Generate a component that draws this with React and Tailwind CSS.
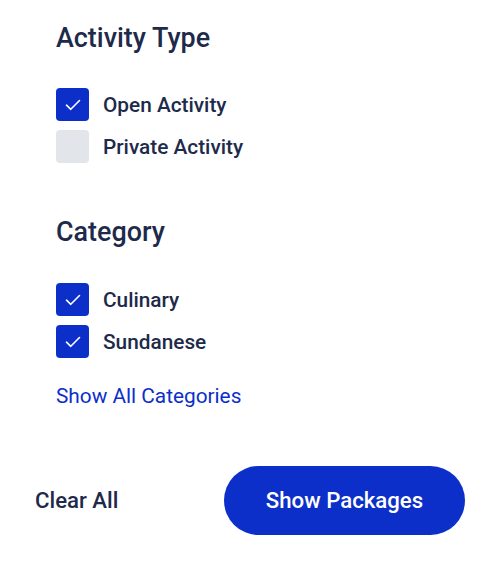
import React, { useState } from 'react';

const Check = () => (
  <svg width="16" height="12" viewBox="0 0 16 12" fill="none">
    <path d="M1.5 6.2 L5.8 10.3 L14.5 1.5" stroke="white" strokeWidth="1.6" strokeLinecap="round" strokeLinejoin="round" />
  </svg>
);

const CheckRow = ({ label, checked, onToggle }) => (
  <button onClick={onToggle} className="flex items-center gap-[14px] text-left">
    <span
      className={`w-[33px] h-[33px] rounded-[4px] flex items-center justify-center ${
        checked ? 'bg-[#0d2fc9]' : 'bg-[#e2e6ea]'
      }`}
    >
      {checked && <Check />}
    </span>
    <span className="text-[20.8px] leading-[24px] font-medium text-[#1e2a4a]">{label}</span>
  </button>
);

export default function App() {
  const [filters, setFilters] = useState({
    open: true,
    private: false,
    culinary: true,
    sundanese: true,
  });

  const toggle = (key) => setFilters((f) => ({ ...f, [key]: !f[key] }));

  const clearAll = () =>
    setFilters({ open: false, private: false, culinary: false, sundanese: false });

  return (
    <div className="w-[500px] h-[566px] bg-white font-['Roboto',sans-serif] flex flex-col">
      <div className="pl-[56px] pt-[22px] flex flex-col">
        {/* Activity Type */}
        <h2 className="text-[26.9px] leading-[32px] font-medium text-[#1e2a4a]">Activity Type</h2>
        <div className="mt-[34px] flex flex-col gap-[9px]">
          <CheckRow label="Open Activity" checked={filters.open} onToggle={() => toggle('open')} />
          <CheckRow label="Private Activity" checked={filters.private} onToggle={() => toggle('private')} />
        </div>

        {/* Category */}
        <h2 className="mt-[53px] text-[26.9px] leading-[32px] font-medium text-[#1e2a4a]">Category</h2>
        <div className="mt-[35px] flex flex-col gap-[9px]">
          <CheckRow label="Culinary" checked={filters.culinary} onToggle={() => toggle('culinary')} />
          <CheckRow label="Sundanese" checked={filters.sundanese} onToggle={() => toggle('sundanese')} />
        </div>

        <button className="mt-[26px] self-start text-[20.8px] leading-[24px] text-[#0d2fc9]">
          Show All Categories
        </button>
      </div>

      {/* Footer */}
      <div className="mt-[58px] px-[35px] flex items-center justify-between">
        <button onClick={clearAll} className="text-[22.2px] font-medium text-[#1e2a4a]">
          Clear All
        </button>
        <button className="w-[241px] h-[69px] rounded-full bg-[#0d2fc9] text-white text-[22.2px] font-medium">
          Show Packages
        </button>
      </div>
    </div>
  );
}
